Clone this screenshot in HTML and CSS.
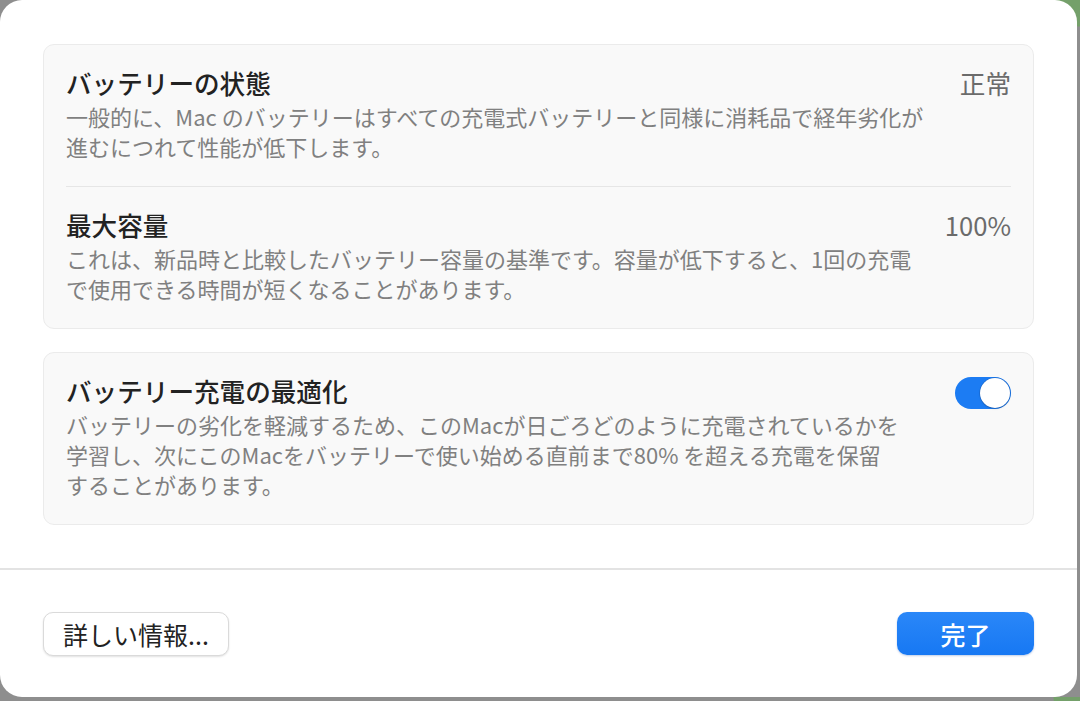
FILE: index.html
```html
<!DOCTYPE html>
<html lang="ja">
<head>
    <meta charset="UTF-8">
    <meta name="viewport" content="width=device-width, initial-scale=1.0">
    <title>バッテリー</title>
    <link rel="stylesheet" href="styles.css">
</head>
<body>
    <div class="dialog">
        <div class="content">
            <div class="card">
                <div class="row">
                    <div class="text">
                        <div class="title">バッテリーの状態</div>
                        <div class="desc">一般的に、Mac のバッテリーはすべての充電式バッテリーと同様に消耗品で経年劣化が<br>進むにつれて性能が低下します。</div>
                    </div>
                    <div class="value">正常</div>
                </div>
                <hr class="divider">
                <div class="row">
                    <div class="text">
                        <div class="title">最大容量</div>
                        <div class="desc">これは、新品時と比較したバッテリー容量の基準です。容量が低下すると、1回の充電<br>で使用できる時間が短くなることがあります。</div>
                    </div>
                    <div class="value">100%</div>
                </div>
            </div>

            <div class="card">
                <div class="row">
                    <div class="text">
                        <div class="title">バッテリー充電の最適化</div>
                        <div class="desc">バッテリーの劣化を軽減するため、このMacが日ごろどのように充電されているかを<br>学習し、次にこのMacをバッテリーで使い始める直前まで80% を超える充電を保留<br>することがあります。</div>
                    </div>
                    <div class="toggle on"><span class="knob"></span></div>
                </div>
            </div>
        </div>

        <div class="footer">
            <button class="btn">詳しい情報...</button>
            <button class="btn btn-primary">完了</button>
        </div>
    </div>
</body>
</html>
```

FILE: styles.css
```css
body {
    margin: 0;
    background:
        radial-gradient(circle at 100% 0, #74a06a 0 26px, transparent 27px),
        #8e8e8e;
    font-family: "Noto Sans CJK JP", "Liberation Sans", sans-serif;
    color: #242424;
}
.dialog {
    width: 1077px;
    height: 697px;
    background-color: #fff;
    border-radius: 22px;
    display: flex;
    flex-direction: column;
    overflow: hidden;
}
.content {
    padding: 44px 43px 43px;
    display: flex;
    flex-direction: column;
    gap: 23px;
}
.card {
    background-color: #f9f9f9;
    border: 1px solid #ebebeb;
    border-radius: 11px;
}
.row {
    display: flex;
    align-items: flex-start;
    padding: 23px 22px 25px 22px;
}
.text {
    flex: 1;
}
.title {
    font-size: 25.6px;
    font-weight: 500;
    line-height: 30px;
    color: #222;
}
.desc {
    margin-top: 3px;
    font-size: 22px;
    line-height: 30px;
    color: #808080;
}
.value {
    font-size: 25.6px;
    line-height: 30px;
    color: #6b6b6b;
}
.divider {
    border: 0;
    height: 1px;
    background: #e6e6e6;
    margin: 0 22px;
}
.toggle {
    width: 56px;
    height: 32px;
    border-radius: 16px;
    background-color: #ddd;
    display: flex;
    align-items: center;
    padding: 0 1px;
    box-sizing: border-box;
    margin-top: 1px;
}
.toggle.on {
    background-color: #1c7cf3;
    justify-content: flex-end;
}
.knob {
    width: 30px;
    height: 30px;
    border-radius: 50%;
    background-color: #fff;
    box-shadow: 0 0 0 0.5px rgba(20, 60, 120, 0.35), 0 1px 2px rgba(0, 0, 0, 0.15);
}
.footer {
    flex: 1;
    border-top: 2px solid #e3e3e3;
    padding: 42px 43px 0;
    display: flex;
    justify-content: space-between;
    align-items: flex-start;
}
.btn {
    font-family: "Noto Sans CJK JP", "Liberation Sans", sans-serif;
    font-size: 25px;
    height: 44px;
    padding: 0 18px;
    border-radius: 10px;
    border: 1px solid #dadada;
    background-color: #fff;
    color: #222;
    box-shadow: 0 1px 2px rgba(0, 0, 0, 0.12);
    width: 186px;
}
.btn-primary {
    width: 137px;
    height: 43px;
    border: none;
    background: linear-gradient(#2a87f8, #1778f3);
    color: #fff;
    font-weight: 500;
    box-shadow: 0 1px 2px rgba(0, 60, 160, 0.25);
}
```
